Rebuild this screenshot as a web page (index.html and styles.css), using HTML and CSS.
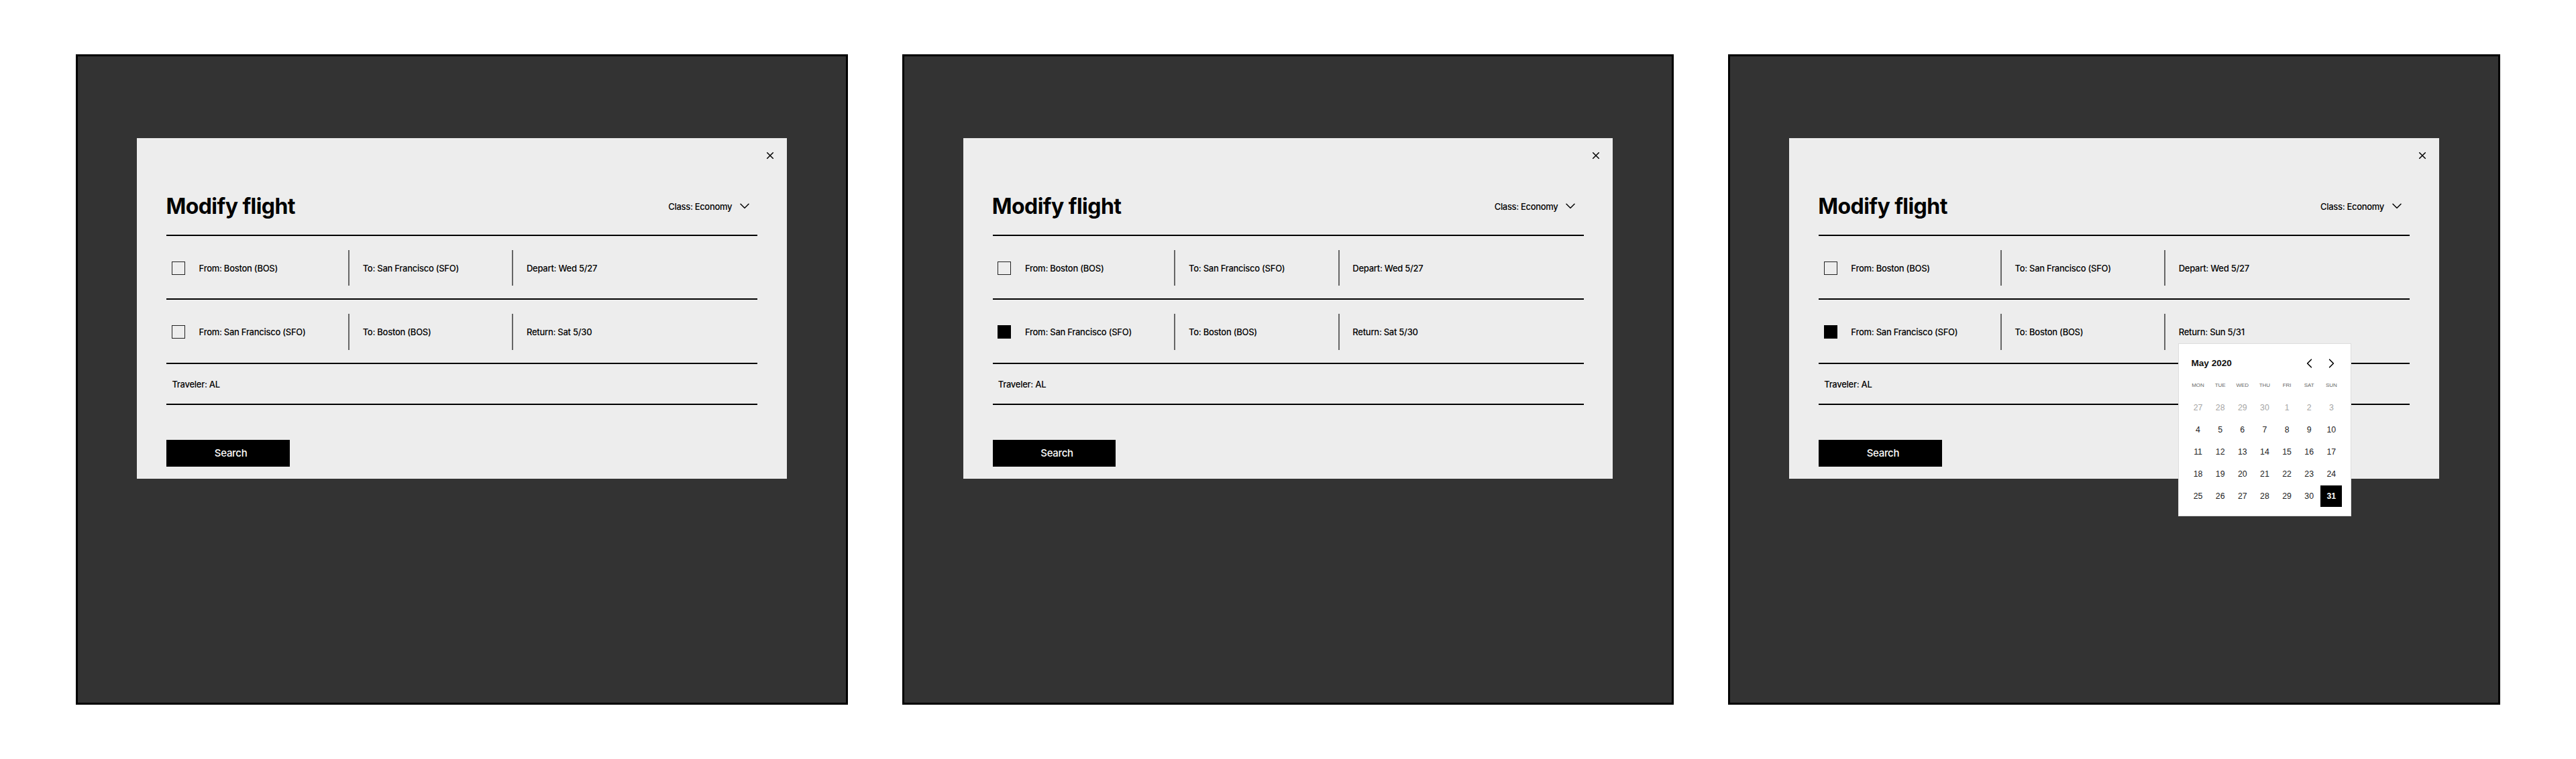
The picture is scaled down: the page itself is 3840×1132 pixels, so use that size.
FILE: index.html
```html
<!DOCTYPE html>
<html lang="en">
<head>
<meta charset="utf-8">
<title>Modify flight</title>
<link rel="stylesheet" href="styles.css">
</head>
<body>
<svg class="sprite" aria-hidden="true">
  <symbol id="close" viewBox="0 0 12 12"><path d="M1.7 1.7l8.6 8.6M10.3 1.7l-8.6 8.6"/></symbol>
  <symbol id="down" viewBox="0 0 14 9"><path d="M1 1.3l6 5.9 6-5.9"/></symbol>
  <symbol id="left" viewBox="0 0 9 14"><path d="M7.4 1.2L1.6 7l5.8 5.8"/></symbol>
  <symbol id="right" viewBox="0 0 9 14"><path d="M1.6 1.2L7.4 7l-5.8 5.8"/></symbol>
</svg>
<main class="board">
  <section class="frame">
    <div class="modal">
      <div class="modal-top"><svg class="icon icon-close"><use href="#close"/></svg></div>
      <header class="modal-head">
        <h1>Modify flight</h1>
        <div class="class-select"><span>Class: Economy</span><svg class="icon icon-down"><use href="#down"/></svg></div>
      </header>
      <div class="leg">
        <div class="cell from"><span class="check"></span>From: Boston (BOS)</div>
        <div class="cell split">To: San Francisco (SFO)</div>
        <div class="cell split">Depart: Wed 5/27</div>
      </div>
      <div class="leg">
        <div class="cell from"><span class="check"></span>From: San Francisco (SFO)</div>
        <div class="cell split">To: Boston (BOS)</div>
        <div class="cell split">Return: Sat 5/30</div>
      </div>
      <div class="traveler">Traveler: AL</div>
      <button class="search">Search</button>
    </div>
  </section>

  <section class="frame">
    <div class="modal">
      <div class="modal-top"><svg class="icon icon-close"><use href="#close"/></svg></div>
      <header class="modal-head">
        <h1>Modify flight</h1>
        <div class="class-select"><span>Class: Economy</span><svg class="icon icon-down"><use href="#down"/></svg></div>
      </header>
      <div class="leg">
        <div class="cell from"><span class="check"></span>From: Boston (BOS)</div>
        <div class="cell split">To: San Francisco (SFO)</div>
        <div class="cell split">Depart: Wed 5/27</div>
      </div>
      <div class="leg">
        <div class="cell from"><span class="check checked"></span>From: San Francisco (SFO)</div>
        <div class="cell split">To: Boston (BOS)</div>
        <div class="cell split">Return: Sat 5/30</div>
      </div>
      <div class="traveler">Traveler: AL</div>
      <button class="search">Search</button>
    </div>
  </section>

  <section class="frame">
    <div class="modal">
      <div class="modal-top"><svg class="icon icon-close"><use href="#close"/></svg></div>
      <header class="modal-head">
        <h1>Modify flight</h1>
        <div class="class-select"><span>Class: Economy</span><svg class="icon icon-down"><use href="#down"/></svg></div>
      </header>
      <div class="leg">
        <div class="cell from"><span class="check"></span>From: Boston (BOS)</div>
        <div class="cell split">To: San Francisco (SFO)</div>
        <div class="cell split">Depart: Wed 5/27</div>
      </div>
      <div class="leg">
        <div class="cell from"><span class="check checked"></span>From: San Francisco (SFO)</div>
        <div class="cell split">To: Boston (BOS)</div>
        <div class="cell split date">Return: Sun 5/31
          <div class="calendar">
            <div class="month">May 2020</div>
            <div><svg class="icon icon-side"><use href="#left"/></svg></div>
            <div><svg class="icon icon-side"><use href="#right"/></svg></div>
            <div class="weekday">MON</div><div class="weekday">TUE</div><div class="weekday">WED</div><div class="weekday">THU</div><div class="weekday">FRI</div><div class="weekday">SAT</div><div class="weekday">SUN</div>
            <div class="off">27</div><div class="off">28</div><div class="off">29</div><div class="off">30</div><div class="off">1</div><div class="off">2</div><div class="off">3</div>
            <div>4</div><div>5</div><div>6</div><div>7</div><div>8</div><div>9</div><div>10</div>
            <div>11</div><div>12</div><div>13</div><div>14</div><div>15</div><div>16</div><div>17</div>
            <div>18</div><div>19</div><div>20</div><div>21</div><div>22</div><div>23</div><div>24</div>
            <div>25</div><div>26</div><div>27</div><div>28</div><div>29</div><div>30</div><div class="selected"><span>31</span></div>
          </div>
        </div>
      </div>
      <div class="traveler">Traveler: AL</div>
      <button class="search">Search</button>
    </div>
  </section>
</main>
</body>
</html>
```
FILE: styles.css
```css
* { box-sizing: border-box; }

body {
  margin: 0;
  background: #fff;
  color: #000;
  font: 500 13px/20px Inter, "Liberation Sans", sans-serif;
  letter-spacing: -0.27px;
}

.sprite { display: none; }

.icon {
  display: block;
  flex: none;
  fill: none;
  stroke: #000;
  stroke-width: 1.5;
  stroke-linecap: round;
  stroke-linejoin: round;
}
.icon-close { width: 12px; height: 12px; }
.icon-down { width: 14px; height: 9px; }
.icon-side { width: 9px; height: 14px; stroke-width: 1.6; }

.board {
  display: flex;
  gap: 81px;
  height: 1132px;
  padding: 81px 0 0 113.4px;
}

.frame {
  flex: none;
  width: 1150.4px;
  height: 970px;
  padding: 122px 0 0 88px;
  border: 3px solid #000;
  background: #333;
}

.modal {
  width: 968.6px;
  height: 508px;
  padding: 0 43.5px 0 44px;
  background: #ededed;
}

.modal-top {
  display: flex;
  justify-content: flex-end;
  height: 59.3px;
  padding-top: 20px;
  margin-right: -24.5px;
}

.modal-head {
  display: flex;
  align-items: center;
  justify-content: space-between;
  height: 84.7px;
  padding-right: 12.4px;
}

h1 {
  margin: 0 0 0 -1px;
  font-size: 32px;
  line-height: 40px;
  font-weight: 700;
  letter-spacing: -0.55px;
}

.class-select {
  display: flex;
  align-items: center;
  gap: 12px;
  letter-spacing: -0.32px;
}

.leg {
  display: grid;
  grid-template-columns: 270.7px 244.3px 1fr;
  align-items: center;
  height: 95.4px;
  padding-top: 2px;
  border-top: 2px solid #000;
}

.cell {
  display: flex;
  align-items: center;
  height: 53.5px;
}
.from { padding-left: 7.5px; gap: 20.7px; }
.split { padding-left: 19.6px; border-left: 2px solid #666; }

.check {
  flex: none;
  width: 20px;
  height: 20px;
  border: 1.4px solid #222;
}
.checked { background: #000; border-color: #000; }

.traveler {
  display: flex;
  align-items: center;
  height: 63.4px;
  padding: 1px 0 0 8px;
  border-top: 2px solid #000;
  border-bottom: 2px solid #000;
}

.search {
  display: block;
  width: 183.5px;
  height: 40px;
  margin: 51.6px 0 0;
  padding: 0 0 0 8px;
  border: 0;
  background: #000;
  color: #fff;
  font: inherit;
  font-size: 15px;
  letter-spacing: -0.3px;
}

/* Date picker, hanging below the return date */
.date { position: relative; }
.calendar {
  position: absolute;
  left: 18.6px;
  top: 43.4px;
  display: grid;
  grid-template-columns: repeat(7, 33.15px);
  grid-auto-rows: 33.1px;
  width: 258.6px;
  height: 258.6px;
  padding: 12.3px 12.2px;
  border: 1px solid #ddd;
  background: #fff;
  color: #222;
  font: 400 12.3px/16px "Liberation Sans", sans-serif;
  letter-spacing: 0;
}
.calendar > div {
  display: flex;
  align-items: center;
  justify-content: center;
}
.calendar .month {
  grid-column: span 5;
  justify-content: flex-start;
  padding-left: 6.5px;
  color: #111;
  font-size: 13.6px;
  font-weight: 700;
}
.calendar .weekday { color: #666; font-size: 8px; }
.calendar .off { color: #a5a5a5; }
.selected span {
  width: 32px;
  height: 32px;
  background: #000;
  color: #fff;
  font-weight: 700;
  line-height: 32px;
  text-align: center;
}
```
